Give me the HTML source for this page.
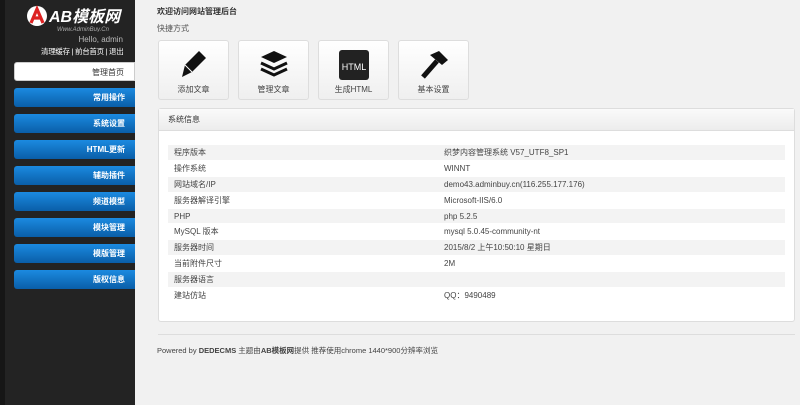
<!DOCTYPE html>
<html><head><meta charset="utf-8"><style>
*{margin:0;padding:0;box-sizing:border-box}
body{width:800px;height:405px;overflow:hidden;background:#f1f1f1;font-family:"Liberation Sans","Noto Sans CJK SC",sans-serif;font-size:8px;color:#333;position:relative}
#side{position:absolute;left:0;top:0;width:135px;height:405px;background:#232323;border-left:5px solid #161616}
.logo{position:absolute;left:20px;top:4px;width:105px;height:28px}
.hello{position:absolute;right:12px;top:35px;color:#bbb;font-size:8px}
.links{position:absolute;left:36px;top:46px;color:#fff;font-size:7.5px;white-space:nowrap;letter-spacing:-0.3px}
.m{position:absolute;left:9px;width:121px;height:19px;border-radius:3px 0 0 3px;background:linear-gradient(#1b8ae0,#0a5ea8);color:#fff;font-weight:bold;font-size:8px;text-align:right;padding-right:10px;line-height:19px}
.m.on{background:#fff;color:#333;font-weight:normal;border:1px solid #ccc}
.t1{position:absolute;left:157px;top:6px;font-weight:bold;font-size:8px}
.t2{position:absolute;left:157px;top:23px;font-size:8px;color:#555}
.q{position:absolute;top:40px;width:71px;height:60px;background:linear-gradient(#fff,#efefef);border:1px solid #ddd;border-radius:3px;text-align:center}
.q span{position:absolute;left:0;right:0;top:43px;font-size:8px;color:#444}
.q svg{position:absolute;left:20px;top:7px}
.panel{position:absolute;left:158px;top:108px;width:637px;height:214px;background:#fff;border:1px solid #ddd;border-radius:3px}
.ph{height:22px;background:linear-gradient(#fafafa,#ececec);border-bottom:1px solid #ddd;padding-left:9px;line-height:22px;font-size:8px}
table{position:absolute;left:9px;top:36px;width:617px;border-collapse:collapse}
td{height:15.8px;font-size:8px;color:#444;padding-left:6px;border-bottom:1px solid #fff}
tr:nth-child(odd) td{background:#f3f3f3}
td:first-child{width:270px}
.hr{position:absolute;left:158px;top:334px;width:637px;border-top:1px solid #ddd}
.foot{position:absolute;left:157px;top:345px;font-size:7.5px;color:#444}
</style></head><body>
<div id="side">
<svg class="logo" viewBox="0 0 105 28"><circle cx="12" cy="12" r="10" fill="#fff"/><path d="M6 19 L12 5 L18 19 M8.5 14 H15.5" stroke="#d22" stroke-width="3.2" fill="none"/><text x="24" y="18" fill="#fff" font-size="16" font-weight="bold" font-style="italic" font-family="Liberation Sans,Noto Sans CJK SC,sans-serif">AB模板网</text><text x="32" y="27" fill="#aaa" font-size="6" font-style="italic" font-family="Liberation Sans,sans-serif">Www.AdminBuy.Cn</text></svg>
<div class="hello">Hello, admin</div>
<div class="links">清理缓存 | 前台首页 | 退出</div>
<div class="m on" style="top:62px">管理首页</div>
<div class="m" style="top:88px">常用操作</div>
<div class="m" style="top:114px">系统设置</div>
<div class="m" style="top:140px">HTML更新</div>
<div class="m" style="top:166px">辅助插件</div>
<div class="m" style="top:192px">频道模型</div>
<div class="m" style="top:218px">模块管理</div>
<div class="m" style="top:244px">模版管理</div>
<div class="m" style="top:270px">版权信息</div>
</div>
<div class="t1">欢迎访问网站管理后台</div>
<div class="t2">快捷方式</div>
<div class="q" style="left:158px"><svg width="30" height="32" viewBox="0 0 30 32"><path d="M3 29 L6 17 L20 3 L27 10 L13 24 Z" fill="#111"/><path d="M6 17 L13 24" stroke="#fff" stroke-width="1"/></svg><span>添加文章</span></div>
<div class="q" style="left:238px"><svg width="30" height="32" viewBox="0 0 30 32"><path d="M2 9 L15 3 L28 9 L15 15Z" fill="#111"/><path d="M2 15 L15 21 L28 15 M2 21 L15 27 L28 21" stroke="#111" stroke-width="3" fill="none"/></svg><span>管理文章</span></div>
<div class="q" style="left:318px"><svg width="30" height="32" viewBox="0 0 30 32"><rect x="0" y="2" width="30" height="30" rx="3" fill="#222"/><text x="15" y="22" fill="#fff" font-size="9" text-anchor="middle" font-family="Liberation Sans,sans-serif">HTML</text></svg><span>生成HTML</span></div>
<div class="q" style="left:398px"><svg width="30" height="32" viewBox="0 0 30 32"><path d="M4 29 L18 13" stroke="#111" stroke-width="5"/><path d="M11 7 L20 3 L29 12 L23 17 Z" fill="#111"/></svg><span>基本设置</span></div>
<div class="panel"><div class="ph">系统信息</div>
<table>
<tr><td>程序版本</td><td>织梦内容管理系统 V57_UTF8_SP1</td></tr>
<tr><td>操作系统</td><td>WINNT</td></tr>
<tr><td>网站域名/IP</td><td>demo43.adminbuy.cn(116.255.177.176)</td></tr>
<tr><td>服务器解译引擎</td><td>Microsoft-IIS/6.0</td></tr>
<tr><td>PHP</td><td>php 5.2.5</td></tr>
<tr><td>MySQL 版本</td><td>mysql 5.0.45-community-nt</td></tr>
<tr><td>服务器时间</td><td>2015/8/2 上午10:50:10 星期日</td></tr>
<tr><td>当前附件尺寸</td><td>2M</td></tr>
<tr><td>服务器语言</td><td></td></tr>
<tr><td>建站仿站</td><td>QQ：9490489</td></tr>
</table></div>
<div class="hr"></div>
<div class="foot">Powered by <b>DEDECMS</b> 主题由<b>AB模板网</b>提供 推荐使用chrome 1440*900分辨率浏览</div>
</body></html>
